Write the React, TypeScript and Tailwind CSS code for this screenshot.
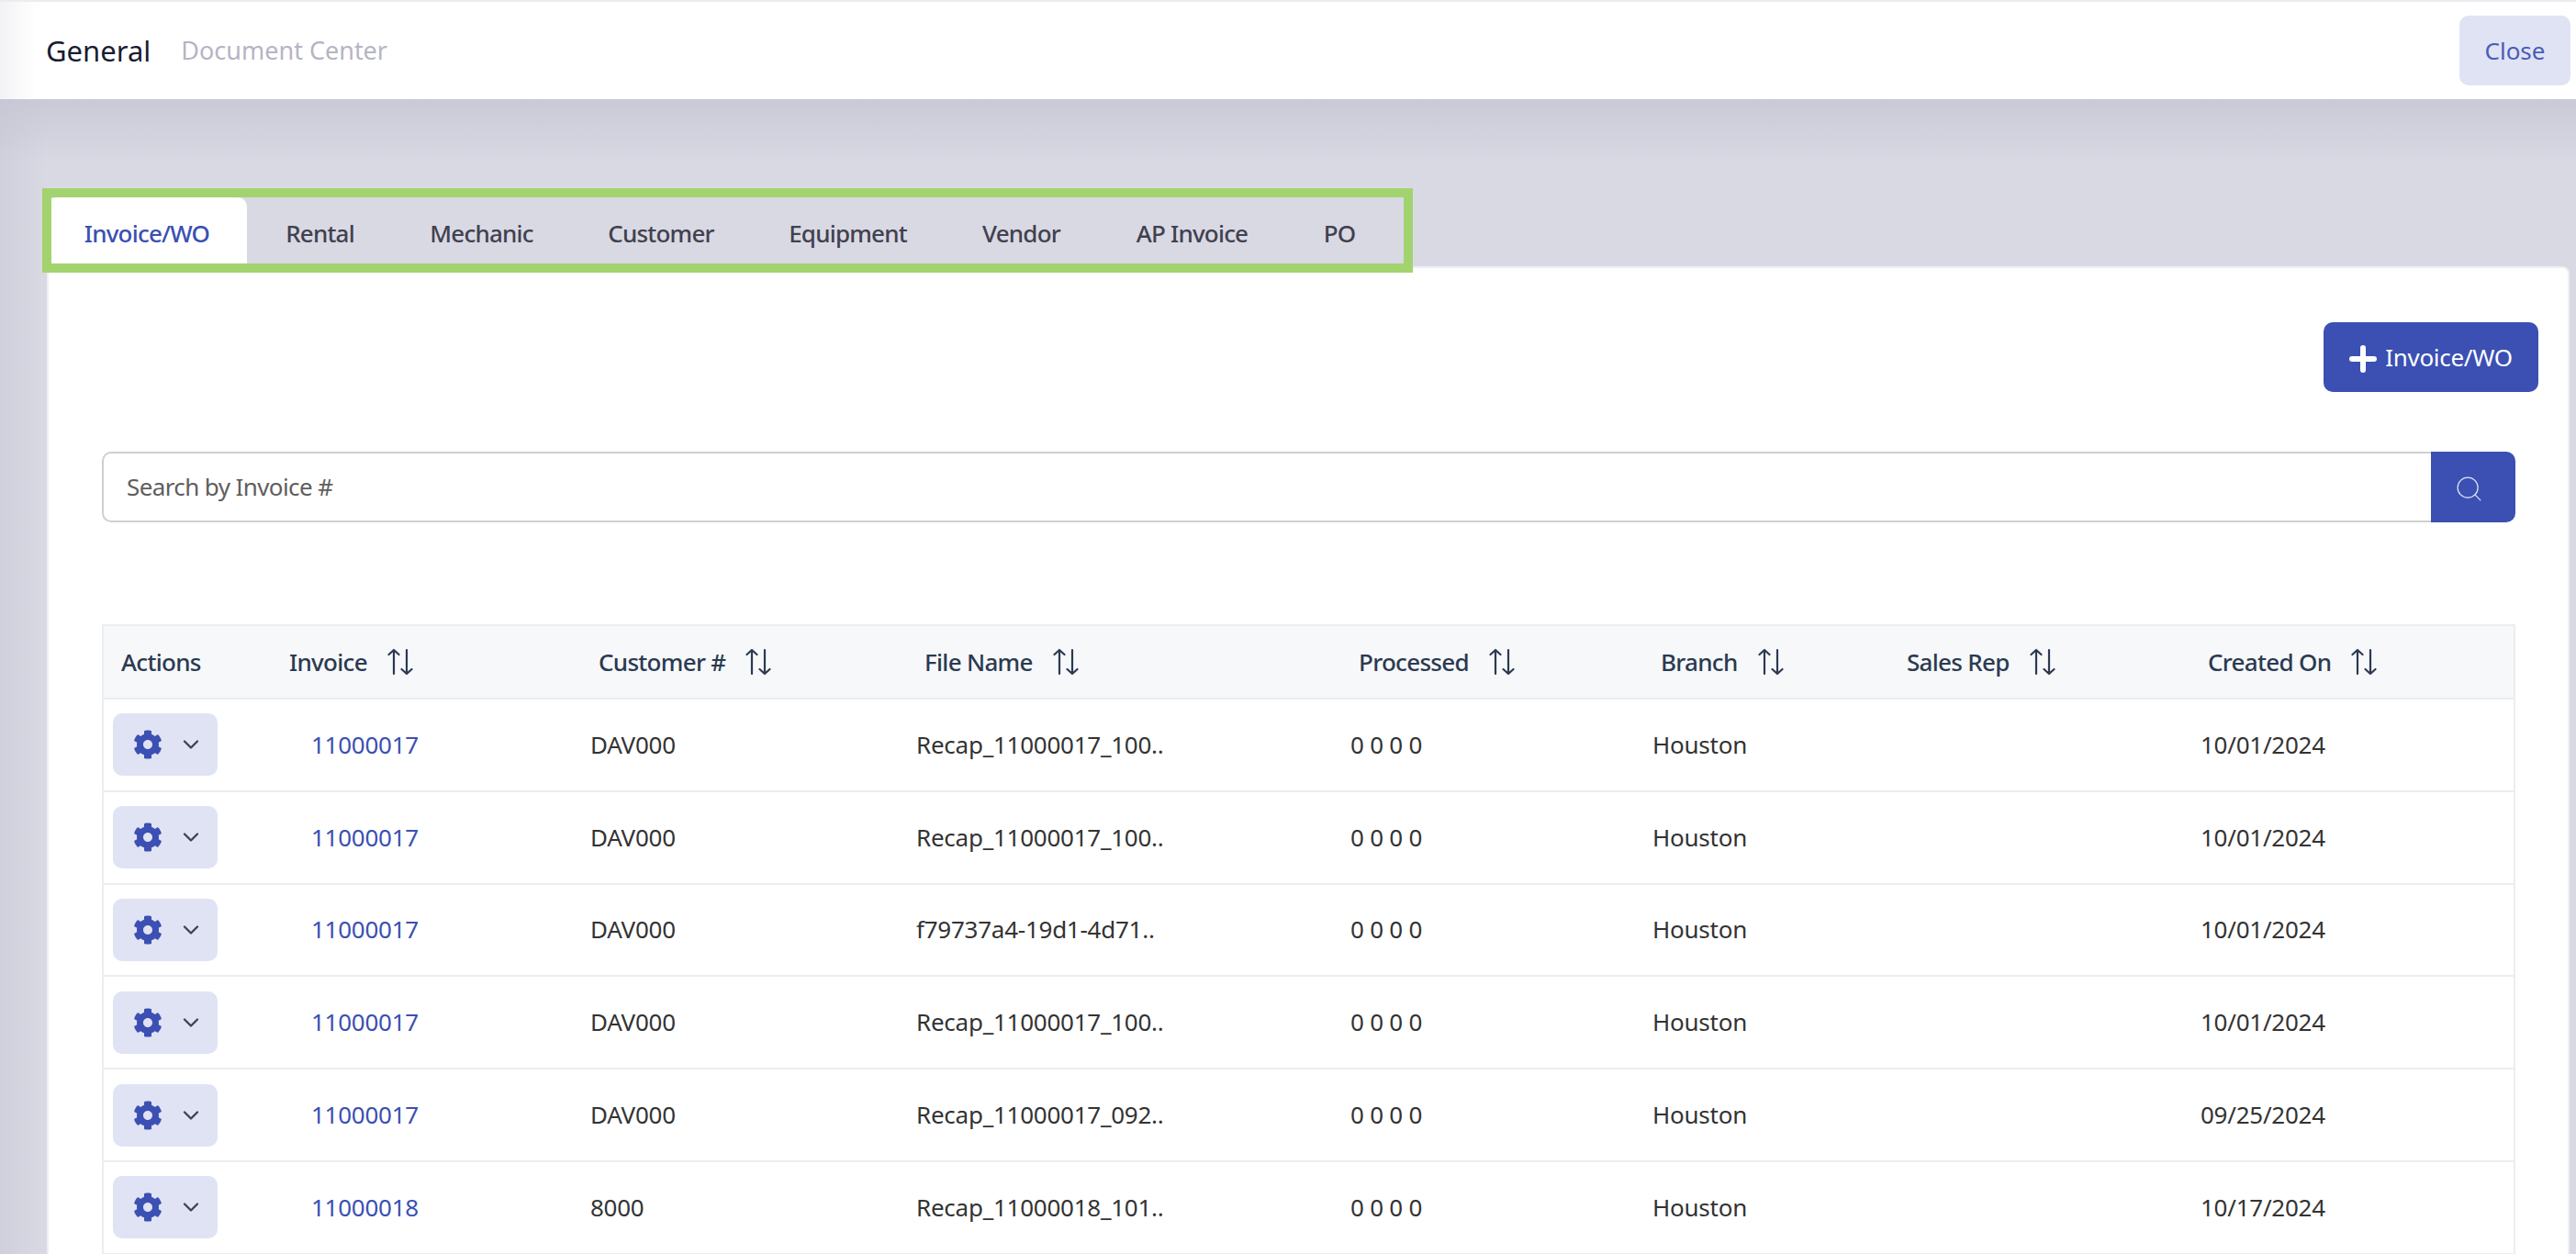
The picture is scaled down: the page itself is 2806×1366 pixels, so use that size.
import React from 'react'
import { FaCog } from 'react-icons/fa'
import { ChevronDown, Search } from 'lucide-react'

const tabs = [
  { label: 'Invoice/WO', width: 'w-[218px]', active: true },
  { label: 'Rental', width: 'w-[159px]' },
  { label: 'Mechanic', width: 'w-[193px]' },
  { label: 'Customer', width: 'w-[198px]' },
  { label: 'Equipment', width: 'w-[209px]' },
  { label: 'Vendor', width: 'w-[169px]' },
  { label: 'AP Invoice', width: 'w-[203px]' },
  { label: 'PO', width: 'w-[118px]' },
]

const columns = [
  { label: 'Actions', width: 'w-[175px]', pad: 'pl-[19px]', sort: false },
  { label: 'Invoice', width: 'w-[337px]', pad: 'pl-[28px]', sort: true },
  { label: 'Customer #', width: 'w-[355px]', pad: 'pl-[28px]', sort: true },
  { label: 'File Name', width: 'w-[473px]', pad: 'pl-[28px]', sort: true },
  { label: 'Processed', width: 'w-[329px]', pad: 'pl-[28px]', sort: true },
  { label: 'Branch', width: 'w-[269px]', pad: 'pl-[28px]', sort: true },
  { label: 'Sales Rep', width: 'w-[328px]', pad: 'pl-[27px]', sort: true },
  { label: 'Created On', width: 'w-[361px]', pad: 'pl-[27px]', sort: true },
]

const rows = [
  { invoice: '11000017', customer: 'DAV000', file: 'Recap_11000017_100..', date: '10/01/2024' },
  { invoice: '11000017', customer: 'DAV000', file: 'Recap_11000017_100..', date: '10/01/2024' },
  { invoice: '11000017', customer: 'DAV000', file: 'f79737a4-19d1-4d71..', date: '10/01/2024' },
  { invoice: '11000017', customer: 'DAV000', file: 'Recap_11000017_100..', date: '10/01/2024' },
  { invoice: '11000017', customer: 'DAV000', file: 'Recap_11000017_092..', date: '09/25/2024' },
  { invoice: '11000018', customer: '8000', file: 'Recap_11000018_101..', date: '10/17/2024' },
]

const SortIcon = () => (
  <svg width="28" height="30" viewBox="0 0 28 30" fill="none" stroke="#2b3a51" strokeWidth="2.2" strokeLinecap="round" strokeLinejoin="round" className="ml-[22px] shrink-0">
    <path d="M7 28V2M1.5 7 7 2l5.5 5" />
    <path d="M21 2v26M15.5 23l5.5 5 5.5-5" />
  </svg>
)

const App = () => {
  return (
    <div className="h-[1366px] w-full overflow-hidden bg-[#d9d9e4] font-['Noto_Sans',sans-serif]">
      <header className="flex h-[108px] items-center justify-between border-t-2 border-[#ecebf2] bg-[linear-gradient(to_right,#f3f3f5,#ffffff_40px)] pr-[6px] pl-[50px]">
        <div className="flex items-center gap-[33px]">
          <span className="text-[31px] text-[#181c32]">General</span>
          <span className="text-[27px] text-[#b5b5c3]">Document Center</span>
        </div>
        <button className="h-[76px] w-[121px] rounded-[10px] bg-[#e0e3f3] text-[26px] text-[#4a5cb8]">Close</button>
      </header>

      <main className="h-[1258px] bg-[linear-gradient(to_bottom,rgba(195,195,210,0.7),rgba(217,217,228,0)_70px),linear-gradient(to_right,#d0d0dc,#d9d9e4_50px)] pt-[107px] pr-[7px] pl-[51px]">
        <div className="relative flex h-[75px] w-fit">
          {tabs.map((tab) => (
            <div
              key={tab.label}
              className={`${tab.width} flex items-center justify-center pt-[3px] text-[26px] font-medium tracking-[-0.8px] ${tab.active ? 'rounded-t-[10px] bg-white text-[#3b50b2]' : 'text-[#41414f]'}`}
            >
              {tab.label}
            </div>
          ))}
          <div className="absolute top-[-10px] right-[-21px] bottom-[-7px] left-[-5px] border-[10px] border-[#a3d36e]" />
        </div>

        <section className="h-[1100px] rounded-tr-[8px] border-x-2 border-t-2 border-[#eeeef5] bg-white pt-[59px] pr-[32px] pl-[58px]">
          <div className="flex justify-end">
            <button className="flex h-[76px] w-[234px] items-center justify-center gap-[9px] rounded-[10px] bg-[#3b50b2] text-[26px] tracking-[-0.3px] text-white">
              <svg width="30" height="30" viewBox="0 0 30 30" fill="none" stroke="white" strokeWidth="6" strokeLinecap="round" className="mt-[3px]">
                <path d="M15 3v24M3 15h24" />
              </svg>
              Invoice/WO
            </button>
          </div>

          <div className="mt-[65px] mr-[25px] flex h-[77px]">
            <div className="flex flex-1 items-center rounded-l-[10px] border-2 border-r-0 border-[#cfcfd2] bg-white pl-[25px] text-[26px] tracking-[-0.6px] text-[#5e5e5e]">
              Search by Invoice #
            </div>
            <div className="flex w-[92px] items-center justify-center rounded-r-[10px] bg-[#3b50b2]">
              <Search size={33} strokeWidth={0.9} color="#dfe3f5" className="mt-[4px] mr-[9px]" />
            </div>
          </div>

          <table className="mt-[111px] w-[2627px] table-fixed border-collapse text-[26px]">
            <thead>
              <tr className="h-[80px] border-2 border-[#ecedf1] bg-[#f7f8fa]">
                {columns.map((col) => (
                  <th key={col.label} className={`${col.width} ${col.pad} text-left font-medium tracking-[-0.7px] text-[#2b3a51]`}>
                    <span className="flex items-center">
                      {col.label}
                      {col.sort && <SortIcon />}
                    </span>
                  </th>
                ))}
              </tr>
            </thead>
            <tbody className="tracking-[-0.25px] text-[#333333]">
              {rows.map((row, i) => (
                <tr key={i} className="h-[100.8px] border-2 border-[#ecedf1]">
                  <td className="pl-[10px]">
                    <div className="flex h-[68px] w-[114px] items-center rounded-[10px] bg-[#e0e3f3] pl-[22px]">
                      <FaCog size={32} color="#3b50b2" />
                      <ChevronDown size={28} strokeWidth={2} color="#41414f" className="ml-[17px]" />
                    </div>
                  </td>
                  <td className="pl-[52px] text-[#3b50b2]">{row.invoice}</td>
                  <td className="pl-[19px]">{row.customer}</td>
                  <td className="pl-[19px]">{row.file}</td>
                  <td className="pl-[19px]">0 0 0 0</td>
                  <td className="pl-[19px]">Houston</td>
                  <td />
                  <td className="pl-[19px]">{row.date}</td>
                </tr>
              ))}
            </tbody>
          </table>
        </section>
      </main>
    </div>
  )
}

export default App
